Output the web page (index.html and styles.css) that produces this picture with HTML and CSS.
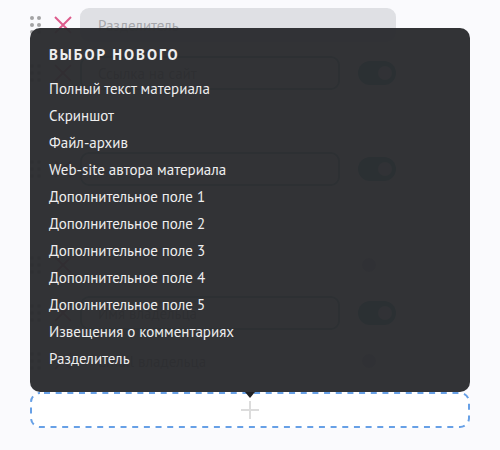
FILE: index.html
```
<!DOCTYPE html>
<html lang="ru">
<head>
<meta charset="UTF-8">
<title>Поля</title>
<link rel="stylesheet" href="styles.css">
</head>
<body>

<svg class="sprite">
    <symbol id="drag" viewBox="0 0 12 18">
        <circle cx="2" cy="2" r="2"/><circle cx="9" cy="2" r="2"/>
        <circle cx="2" cy="9" r="2"/><circle cx="9" cy="9" r="2"/>
        <circle cx="2" cy="16" r="2"/><circle cx="9" cy="16" r="2"/>
    </symbol>
    <symbol id="cross" viewBox="0 0 18 18">
        <path d="M1 1L17 17M17 1L1 17"/>
    </symbol>
</svg>

<form class="fields">
    <div class="row divider">
        <svg class="drag"><use href="#drag"/></svg>
        <button type="button" class="remove" aria-label="Удалить"><svg><use href="#cross"/></svg></button>
        <input type="text" class="name" value="Разделитель" aria-label="Название">
    </div>
    <div class="row">
        <svg class="drag"><use href="#drag"/></svg>
        <button type="button" class="remove" aria-label="Удалить"><svg><use href="#cross"/></svg></button>
        <input type="text" class="name" value="Ссылка на сайт" aria-label="Название">
        <input type="checkbox" class="switch" aria-label="Включено" checked>
    </div>
    <div class="row off"></div>
    <div class="row">
        <svg class="drag"><use href="#drag"/></svg>
        <button type="button" class="remove" aria-label="Удалить"><svg><use href="#cross"/></svg></button>
        <input type="text" class="name" aria-label="Название">
        <input type="checkbox" class="switch" aria-label="Включено" checked>
    </div>
    <div class="row off"></div>
    <div class="row off">
        <svg class="drag"><use href="#drag"/></svg>
        <button type="button" class="remove" aria-label="Удалить"><svg><use href="#cross"/></svg></button>
        <input type="text" class="name" aria-label="Название">
        <input type="checkbox" class="switch" aria-label="Включено">
    </div>
    <div class="row">
        <svg class="drag"><use href="#drag"/></svg>
        <button type="button" class="remove" aria-label="Удалить"><svg><use href="#cross"/></svg></button>
        <input type="text" class="name" value="Имя владельца" aria-label="Название">
        <input type="checkbox" class="switch" aria-label="Включено" checked>
    </div>
    <div class="row off">
        <svg class="drag"><use href="#drag"/></svg>
        <button type="button" class="remove" aria-label="Удалить"><svg><use href="#cross"/></svg></button>
        <input type="text" class="name" value="Email владельца" aria-label="Название">
        <input type="checkbox" class="switch" aria-label="Включено">
    </div>

    <div class="add">
        <button type="button" class="add-button" aria-label="Добавить поле">
            <svg class="dashes"><rect x="1" y="1" rx="9"/></svg>
            <svg class="plus" viewBox="0 0 18 18"><path d="M9 0V18M0 9H18"/></svg>
        </button>
        <div class="popup">
            <h2>Выбор нового</h2>
            <ul>
                <li><button type="button">Полный текст материала</button></li>
                <li><button type="button">Скриншот</button></li>
                <li><button type="button">Файл-архив</button></li>
                <li><button type="button">Web-site автора материала</button></li>
                <li><button type="button">Дополнительное поле 1</button></li>
                <li><button type="button">Дополнительное поле 2</button></li>
                <li><button type="button">Дополнительное поле 3</button></li>
                <li><button type="button">Дополнительное поле 4</button></li>
                <li><button type="button">Дополнительное поле 5</button></li>
                <li><button type="button">Извещения о комментариях</button></li>
                <li><button type="button">Разделитель</button></li>
            </ul>
        </div>
    </div>
</form>

</body>
</html>
```
FILE: styles.css
```
* {
    box-sizing: border-box;
}
body {
    margin: 0;
    background: #fafafd;
    font-family: "PT Sans", "Noto Sans", sans-serif;
    font-size: 15px;
}
button, input {
    font: inherit;
}
button {
    padding: 0;
    border: none;
    background: none;
    cursor: pointer;
}
.sprite {
    display: none;
}
.fields {
    display: flex;
    flex-direction: column;
    gap: 14px;
    padding: 8px 30px;
}
.row {
    display: flex;
    align-items: center;
    height: 34px;
    padding-right: 74px;
}
.drag {
    width: 12px;
    height: 18px;
    margin-right: 12px;
    fill: #a3a3a5;
}
.remove {
    display: flex;
    margin-right: 8px;
}
.remove svg {
    width: 18px;
    height: 18px;
    fill: none;
    stroke: #dd5b8c;
    stroke-width: 2;
}
.name {
    flex: 1;
    min-width: 0;
    height: 34px;
    padding: 0 16px;
    border: 2px solid #5f9ea0;
    border-radius: 9px;
    background: #fff;
    color: #777;
}
.divider .name {
    border-color: #dfe0e4;
    background: #dfe0e4;
    color: #a6a7ab;
}
.off .name {
    border-color: #f0f0f4;
}
.switch {
    appearance: none;
    display: flex;
    align-items: center;
    width: 38px;
    height: 24px;
    margin: 0 0 0 18px;
    padding: 4px;
    border-radius: 12px;
}
.switch::before {
    content: "";
    width: 14px;
    height: 14px;
    border-radius: 50%;
    background: #b9bcc8;
}
.switch:checked {
    justify-content: flex-end;
    background: #2a8f96;
}
.switch:checked::before {
    background: #cfe0e4;
}
.add {
    position: relative;
}
.add-button {
    position: relative;
    display: flex;
    align-items: center;
    justify-content: center;
    width: 100%;
    height: 36px;
    border-radius: 10px;
    background: #fff;
}
.dashes {
    position: absolute;
    top: 0;
    left: 0;
    width: 100%;
    height: 100%;
}
.dashes rect {
    width: calc(100% - 2px);
    height: calc(100% - 2px);
    fill: none;
    stroke: #67a0e6;
    stroke-width: 2;
    stroke-dasharray: 6 5.67;
    stroke-dashoffset: -4;
}
.plus {
    width: 18px;
    height: 18px;
    stroke: #dcdcdc;
    stroke-width: 2;
}
.popup {
    position: absolute;
    bottom: 100%;
    left: 0;
    right: 0;
    padding: 15px 19px 20px;
    border-radius: 10px;
    background: rgba(43, 44, 48, .97);
    color: #eeeeef;
}
.popup::after {
    content: "";
    position: absolute;
    top: 100%;
    left: 50%;
    margin-left: -5px;
    border: 5px solid transparent;
    border-top: 6px solid #202124;
    border-bottom: none;
}
.popup h2 {
    margin: 0 0 8px;
    font-size: 15px;
    line-height: 24px;
    letter-spacing: 2px;
    text-transform: uppercase;
}
.popup ul {
    margin: 0;
    padding: 0;
    list-style: none;
}
.popup li button {
    display: block;
    width: 100%;
    color: inherit;
    line-height: 27px;
    text-align: left;
}
```
